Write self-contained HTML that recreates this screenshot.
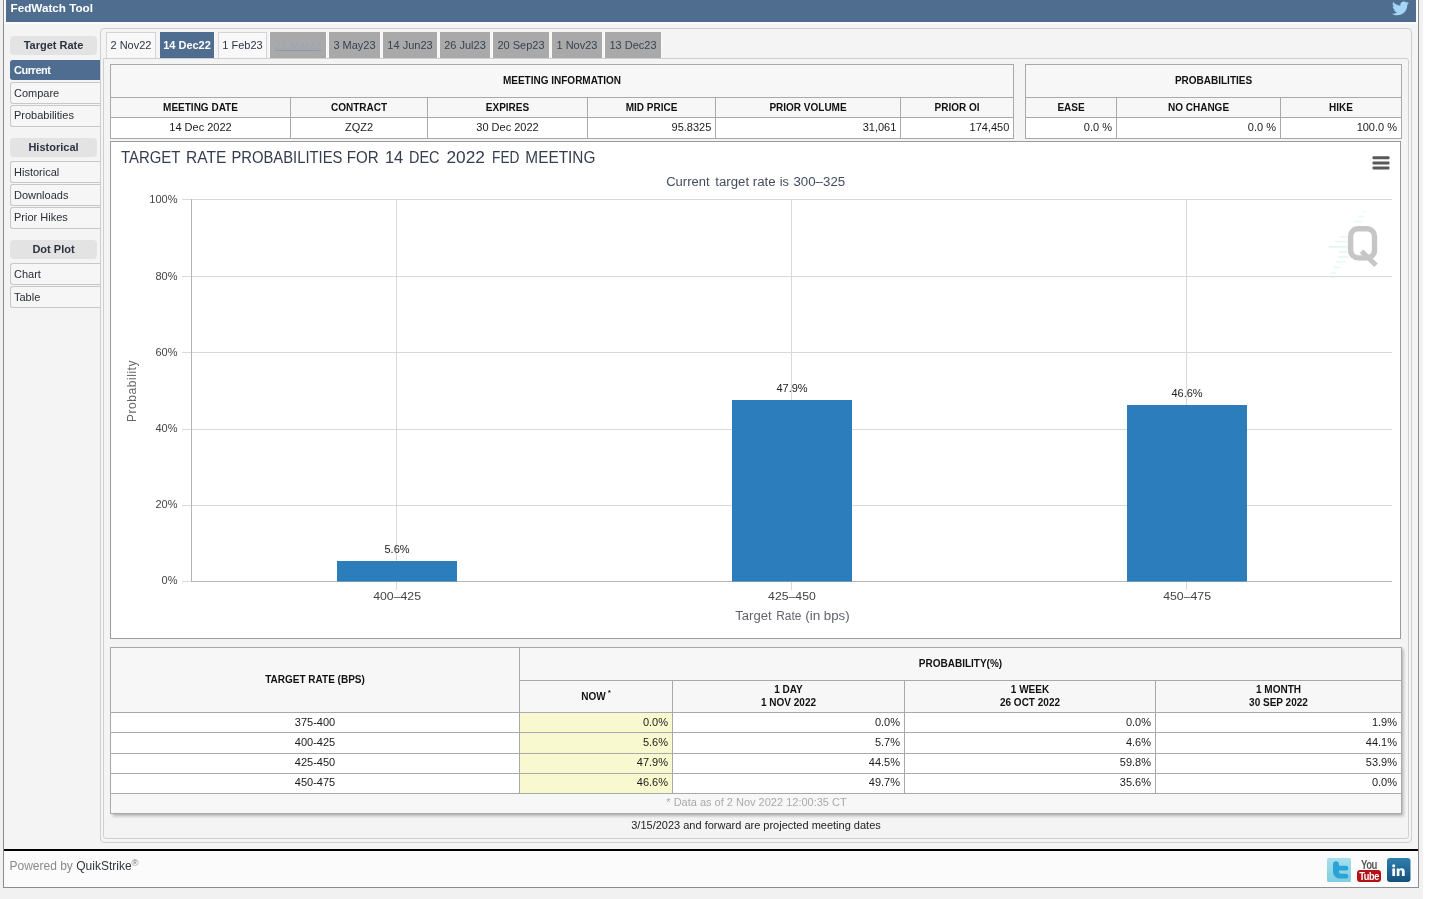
<!DOCTYPE html><html><head><meta charset="utf-8"><title>FedWatch Tool</title><style>
*{box-sizing:border-box}
html,body{margin:0;padding:0}
body{width:1456px;height:899px;overflow:hidden;background:#fff;font-family:"Liberation Sans",sans-serif;font-size:11px;color:#222;position:relative}
.a{position:absolute}
.t{position:absolute;white-space:nowrap;line-height:1}
.c{text-align:center}
.r{text-align:right}
.b{font-weight:bold}
.pill{position:absolute;left:10px;width:87px;height:19px;background:#e3e3e3;border-radius:4px;text-align:center;font-weight:bold;font-size:11px;line-height:19px;color:#2b3340}
.it{position:absolute;left:10px;width:91px;height:21px;background:#f6f6f6;border:1px solid #c8c8c8;border-right:none;border-radius:3px 0 0 3px;font-size:11px;line-height:19px;padding-left:3px;color:#2a2e36}
.it.sel{background:#4f6d90;border-color:#4f6d90;color:#fff;font-weight:bold;letter-spacing:-0.45px}
.tab{position:absolute;top:32px;height:26px;font-size:11px;line-height:25px;text-align:center;border:1px solid #d4d4d4;border-bottom:none;background:#f8f8f8;color:#2b3647}
.tab.g{background:#a9a9a9;border-color:#a9a9a9;color:#364353;box-shadow:-1px 0 0 #fafafa,1px 0 0 #fafafa}
.tab.sel{background:#4f6d90;border-color:#4f6d90;color:#fff;font-weight:bold}
.cell{position:absolute;border:1px solid #a9a9a9;margin:0}
.hd{background:#f7f7f7;font-weight:bold;font-size:10px;text-align:center;color:#111}
.dt{background:#fff;font-size:11px;color:#1a1a1a}
</style></head><body><div id="w" style="position:absolute;left:0;top:0;width:1456px;height:899px;will-change:transform">
<div class="a" style="left:0;top:0;width:1423px;height:899px;background:#f1f1f1"></div>
<div class="a" style="left:3px;top:-1px;width:1416px;height:889px;border:1px solid #8c8c8c;background:#f4f4f4"></div>
<div class="a" style="left:4px;top:0;width:1414px;height:24px;background:#fcfcfc"></div>
<div class="a" style="left:6px;top:0;width:1410px;height:22px;background:#4f6d8f"></div>
<div class="t b" style="left:10.5px;top:1.5px;font-size:11.7px;color:#fff">FedWatch Tool</div>
<svg class="a" style="left:1392px;top:1px;width:17px;height:15px" viewBox="0 0 24 20"><path fill="#a6d6f5" d="M24 2.4c-.9.4-1.8.7-2.8.8 1-.6 1.8-1.6 2.2-2.7-1 .6-2 1-3.100 1.200C19.300.6 18 0 16.600 0c-2.700 0-4.900 2.200-4.900 4.900 0 .4 0 .8.100 1.100C7.700 5.800 4.100 3.900 1.700.9 1.200 1.700 1 2.500 1 3.400c0 1.700.9 3.200 2.200 4.100-.8 0-1.600-.2-2.200-.6v.1c0 2.400 1.700 4.400 3.900 4.800-.4.100-.8.200-1.300.2-.3 0-.6 0-.9-.1.600 2 2.400 3.400 4.600 3.400-1.700 1.300-3.800 2.100-6.100 2.100-.4 0-.8 0-1.200-.1C2.200 18.700 4.800 19.500 7.500 19.500c9.100 0 14-7.500 14-14v-.6c1-.7 1.800-1.600 2.500-2.500z"/></svg>
<div class="pill" style="top:36px">Target Rate</div>
<div class="it sel" style="top:60px;height:20px;line-height:18px">Current</div>
<div class="it" style="top:82px;height:22px;line-height:20px">Compare</div>
<div class="it" style="top:105px;height:22px;line-height:18px">Probabilities</div>
<div class="pill" style="top:138px">Historical</div>
<div class="it" style="top:161px;height:22px;line-height:20px">Historical</div>
<div class="it" style="top:184px;height:22px;line-height:20px">Downloads</div>
<div class="it" style="top:207px;height:22px;line-height:19.0px">Prior Hikes</div>
<div class="pill" style="top:240px">Dot Plot</div>
<div class="it" style="top:263px;height:22px;line-height:20px">Chart</div>
<div class="it" style="top:286px;height:22px;line-height:20px">Table</div>
<div class="a" style="left:100px;top:28px;width:1312px;height:815px;border:1px solid #cfcfcf;border-radius:4px;background:#f4f4f4"></div>
<div class="a" style="left:103px;top:58px;width:1306px;height:781px;border:1px solid #cfcfcf;border-radius:0 3px 3px 3px;background:#f4f4f4"></div>
<div class="tab " style="left:106px;width:50px">2 Nov22</div>
<div class="tab sel" style="left:160px;width:54px">14 Dec22</div>
<div class="tab " style="left:218px;width:49px">1 Feb23</div>
<div class="tab g" style="left:270px;width:56px"><u style="color:#9da4b8;text-decoration-color:#8d98ab">22 Mar23</u></div>
<div class="tab g" style="left:329px;width:51px">3 May23</div>
<div class="tab g" style="left:383px;width:54px">14 Jun23</div>
<div class="tab g" style="left:440px;width:50px">26 Jul23</div>
<div class="tab g" style="left:493px;width:56px">20 Sep23</div>
<div class="tab g" style="left:552px;width:50px">1 Nov23</div>
<div class="tab g" style="left:605px;width:56px">13 Dec23</div>
<div class="cell hd" style="left:110px;top:64px;width:904px;height:34px;line-height:32px;">MEETING INFORMATION</div>
<div class="cell hd" style="left:110px;top:97px;width:181px;height:21px;line-height:20.0px;">MEETING DATE</div>
<div class="cell dt" style="left:110px;top:117px;width:181px;height:22px;line-height:18px;text-align:center">14 Dec 2022</div>
<div class="cell hd" style="left:290px;top:97px;width:138px;height:21px;line-height:20.0px;">CONTRACT</div>
<div class="cell dt" style="left:290px;top:117px;width:138px;height:22px;line-height:18px;text-align:center">ZQZ2</div>
<div class="cell hd" style="left:427px;top:97px;width:161px;height:21px;line-height:20.0px;">EXPIRES</div>
<div class="cell dt" style="left:427px;top:117px;width:161px;height:22px;line-height:18px;text-align:center">30 Dec 2022</div>
<div class="cell hd" style="left:587px;top:97px;width:129px;height:21px;line-height:20.0px;">MID PRICE</div>
<div class="cell dt" style="left:587px;top:117px;width:129px;height:22px;line-height:18px;text-align:right;padding-right:3.7px">95.8325</div>
<div class="cell hd" style="left:715px;top:97px;width:186px;height:21px;line-height:20.0px;">PRIOR VOLUME</div>
<div class="cell dt" style="left:715px;top:117px;width:186px;height:22px;line-height:18px;text-align:right;padding-right:3.7px">31,061</div>
<div class="cell hd" style="left:900px;top:97px;width:114px;height:21px;line-height:20.0px;">PRIOR OI</div>
<div class="cell dt" style="left:900px;top:117px;width:114px;height:22px;line-height:18px;text-align:right;padding-right:3.7px">174,450</div>
<div class="cell hd" style="left:1025px;top:64px;width:377px;height:34px;line-height:32px;">PROBABILITIES</div>
<div class="cell hd" style="left:1025px;top:97px;width:92px;height:21px;line-height:20.0px;">EASE</div>
<div class="cell dt" style="left:1025px;top:117px;width:92px;height:22px;line-height:18px;text-align:right;padding-right:4px">0.0 %</div>
<div class="cell hd" style="left:1116px;top:97px;width:165px;height:21px;line-height:20.0px;">NO CHANGE</div>
<div class="cell dt" style="left:1116px;top:117px;width:165px;height:22px;line-height:18px;text-align:right;padding-right:4px">0.0 %</div>
<div class="cell hd" style="left:1280px;top:97px;width:122px;height:21px;line-height:20.0px;">HIKE</div>
<div class="cell dt" style="left:1280px;top:117px;width:122px;height:22px;line-height:18px;text-align:right;padding-right:4px">100.0 %</div>
<div class="a" style="left:110px;top:141px;width:1291px;height:498px;border:1px solid #9a9a9a;background:#fff"></div>
<svg class="a" style="left:0;top:0" width="1456" height="899" viewBox="0 0 1456 899" font-family="Liberation Sans, sans-serif">
<text y="163" font-size="16.5" fill="#333d4e" ><tspan x="120.97" textLength="59.47" lengthAdjust="spacingAndGlyphs">TARGET</tspan><tspan x="186.06" textLength="40.39" lengthAdjust="spacingAndGlyphs">RATE</tspan><tspan x="231.39" textLength="111.09" lengthAdjust="spacingAndGlyphs">PROBABILITIES</tspan><tspan x="346.76" textLength="31.94" lengthAdjust="spacingAndGlyphs">FOR</tspan><tspan x="384.94" textLength="18.34" lengthAdjust="spacingAndGlyphs">14</tspan><tspan x="409.01" textLength="30.54" lengthAdjust="spacingAndGlyphs">DEC</tspan><tspan x="446.43" textLength="38.44" lengthAdjust="spacingAndGlyphs">2022</tspan><tspan x="492.08" textLength="27.38" lengthAdjust="spacingAndGlyphs">FED</tspan><tspan x="525.34" textLength="70.01" lengthAdjust="spacingAndGlyphs">MEETING</tspan></text>
<text y="186" font-size="12" fill="#434d5e" ><tspan x="666.24" textLength="43.36" lengthAdjust="spacingAndGlyphs">Current</tspan><tspan x="715.30" textLength="33.80" lengthAdjust="spacingAndGlyphs">target</tspan><tspan x="752.82" textLength="22.87" lengthAdjust="spacingAndGlyphs">rate</tspan><tspan x="779.75" textLength="9.21" lengthAdjust="spacingAndGlyphs">is</tspan><tspan x="793.49" textLength="51.66" lengthAdjust="spacingAndGlyphs">300–325</tspan></text>
<path d="M182 199.5H1392" stroke="#d9d9d9" stroke-width="1"/>
<path d="M182 276.5H1392" stroke="#d9d9d9" stroke-width="1"/>
<path d="M182 352.5H1392" stroke="#d9d9d9" stroke-width="1"/>
<path d="M182 429.5H1392" stroke="#d9d9d9" stroke-width="1"/>
<path d="M182 505.5H1392" stroke="#d9d9d9" stroke-width="1"/>
<path d="M396.5 200V590" stroke="#d9d9d9" stroke-width="1"/>
<path d="M791.5 200V590" stroke="#d9d9d9" stroke-width="1"/>
<path d="M1186.5 200V590" stroke="#d9d9d9" stroke-width="1"/>
<path d="M191.5 199V582" stroke="#b4b4b4" stroke-width="1"/>
<path d="M182 581.5H191" stroke="#d9d9d9" stroke-width="1"/>
<path d="M191 581.5H1392" stroke="#b4b4b4" stroke-width="1"/>
<text x="177.5" y="203.4" font-size="11" fill="#444" text-anchor="end">100%</text>
<text x="177.5" y="279.6" font-size="11" fill="#444" text-anchor="end">80%</text>
<text x="177.5" y="355.8" font-size="11" fill="#444" text-anchor="end">60%</text>
<text x="177.5" y="432.0" font-size="11" fill="#444" text-anchor="end">40%</text>
<text x="177.5" y="508.2" font-size="11" fill="#444" text-anchor="end">20%</text>
<text x="177.5" y="584.4" font-size="11" fill="#444" text-anchor="end">0%</text>
<rect x="337" y="561" width="120" height="20.5" fill="#2b7ebb"/>
<text x="397.0" y="553" font-size="11" fill="#222" text-anchor="middle">5.6%</text>
<text y="600" font-size="11" fill="#444" ><tspan x="373.22" textLength="47.80" lengthAdjust="spacingAndGlyphs">400–425</tspan></text>
<rect x="732" y="400" width="120" height="181.5" fill="#2b7ebb"/>
<text x="792.0" y="392" font-size="11" fill="#222" text-anchor="middle">47.9%</text>
<text y="600" font-size="11" fill="#444" ><tspan x="768.12" textLength="47.66" lengthAdjust="spacingAndGlyphs">425–450</tspan></text>
<rect x="1127" y="405" width="120" height="176.5" fill="#2b7ebb"/>
<text x="1187.0" y="397" font-size="11" fill="#222" text-anchor="middle">46.6%</text>
<text y="600" font-size="11" fill="#444" ><tspan x="1163.22" textLength="47.80" lengthAdjust="spacingAndGlyphs">450–475</tspan></text>
<text y="620" font-size="12" fill="#62656f" ><tspan x="735.22" textLength="36.37" lengthAdjust="spacingAndGlyphs">Target</tspan><tspan x="776.22" textLength="25.21" lengthAdjust="spacingAndGlyphs">Rate</tspan><tspan x="805.16" textLength="15.13" lengthAdjust="spacingAndGlyphs">(in</tspan><tspan x="823.74" textLength="25.88" lengthAdjust="spacingAndGlyphs">bps)</tspan></text>
<text transform="translate(135.5 391) rotate(-90)" font-size="12" fill="#666" text-anchor="middle" letter-spacing="0.55">Probability</text>
<rect x="1372.5" y="156.3" width="17" height="3" rx="1" fill="#595959"/>
<rect x="1372.5" y="161.4" width="17" height="3" rx="1" fill="#595959"/>
<rect x="1372.5" y="166.5" width="17" height="3" rx="1" fill="#595959"/>
<g>
<rect x="1362.6" y="210.6" width="3.8" height="1.6" fill="#c4ece8" opacity="0.28"/>
<rect x="1357.8" y="215.8" width="6.6" height="1.6" fill="#c4ece8" opacity="0.33"/>
<rect x="1354.1" y="220.8" width="7.6" height="1.6" fill="#c4ece8" opacity="0.39"/>
<rect x="1351.2" y="225.9" width="6.6" height="1.6" fill="#c4ece8" opacity="0.28"/>
<rect x="1348.4" y="231.0" width="5.7" height="1.6" fill="#c4ece8" opacity="0.22"/>
<rect x="1339.9" y="236.1" width="7.6" height="1.6" fill="#c4ece8" opacity="0.39"/>
<rect x="1335.1" y="240.8" width="12.3" height="1.6" fill="#c4ece8" opacity="0.44"/>
<rect x="1328.5" y="246.0" width="18.9" height="1.6" fill="#c4ece8" opacity="0.55"/>
<rect x="1338.9" y="251.0" width="8.0" height="1.6" fill="#c4ece8" opacity="0.39"/>
<rect x="1338.0" y="256.2" width="10.4" height="1.6" fill="#c4ece8" opacity="0.44"/>
<rect x="1336.1" y="261.2" width="9.5" height="1.6" fill="#c4ece8" opacity="0.39"/>
<rect x="1333.2" y="266.6" width="7.6" height="1.6" fill="#c4ece8" opacity="0.39"/>
<rect x="1331.4" y="272.0" width="4.7" height="1.6" fill="#c4ece8" opacity="0.33"/>
<rect x="1329.5" y="276.3" width="5.7" height="1.6" fill="#c4ece8" opacity="0.33"/>
<rect x="1350.6" y="228.7" width="23.9" height="29.2" rx="7.5" fill="none" stroke="#c6c6c6" stroke-width="5.4"/>
<path d="M1361.5 251.2L1376 265.3" stroke="#c6c6c6" stroke-width="5" fill="none"/>
</g>
</svg>
<div class="a" style="left:110px;top:647px;width:1292px;height:167px;background:#f7f7f7;box-shadow:1.5px 2px 3px rgba(0,0,0,.28)"></div>
<div class="cell hd" style="left:110px;top:647px;width:410px;height:66px;line-height:64px">TARGET RATE (BPS)</div>
<div class="cell hd" style="left:519px;top:647px;width:883px;height:34px;line-height:31px">PROBABILITY(%)</div>
<div class="cell hd" style="left:519px;top:680px;width:154px;height:33px;line-height:31px;padding-right:2px">NOW<span style="font-size:8px;position:relative;top:-5px;left:2px">*</span></div>
<div class="cell hd" style="left:672px;top:680px;width:233px;height:33px;line-height:13px;padding-top:2.4px">1 DAY<br>1 NOV 2022</div>
<div class="cell hd" style="left:904px;top:680px;width:252px;height:33px;line-height:13px;padding-top:2.4px">1 WEEK<br>26 OCT 2022</div>
<div class="cell hd" style="left:1155px;top:680px;width:247px;height:33px;line-height:13px;padding-top:2.4px">1 MONTH<br>30 SEP 2022</div>
<div class="cell dt" style="left:110px;top:712px;width:410px;height:21px;line-height:19px;text-align:center">375-400</div>
<div class="cell dt" style="left:519px;top:712px;width:154px;height:21px;background:#f9f9cf;line-height:19px;text-align:right;padding-right:4px">0.0%</div>
<div class="cell dt" style="left:672px;top:712px;width:233px;height:21px;line-height:19px;text-align:right;padding-right:4px">0.0%</div>
<div class="cell dt" style="left:904px;top:712px;width:252px;height:21px;line-height:19px;text-align:right;padding-right:4px">0.0%</div>
<div class="cell dt" style="left:1155px;top:712px;width:247px;height:21px;line-height:19px;text-align:right;padding-right:4px">1.9%</div>
<div class="cell dt" style="left:110px;top:732px;width:410px;height:22px;line-height:18px;text-align:center">400-425</div>
<div class="cell dt" style="left:519px;top:732px;width:154px;height:22px;background:#f9f9cf;line-height:18px;text-align:right;padding-right:4px">5.6%</div>
<div class="cell dt" style="left:672px;top:732px;width:233px;height:22px;line-height:18px;text-align:right;padding-right:4px">5.7%</div>
<div class="cell dt" style="left:904px;top:732px;width:252px;height:22px;line-height:18px;text-align:right;padding-right:4px">4.6%</div>
<div class="cell dt" style="left:1155px;top:732px;width:247px;height:22px;line-height:18px;text-align:right;padding-right:4px">44.1%</div>
<div class="cell dt" style="left:110px;top:753px;width:410px;height:21px;line-height:17.6px;text-align:center">425-450</div>
<div class="cell dt" style="left:519px;top:753px;width:154px;height:21px;background:#f9f9cf;line-height:17.6px;text-align:right;padding-right:4px">47.9%</div>
<div class="cell dt" style="left:672px;top:753px;width:233px;height:21px;line-height:17.6px;text-align:right;padding-right:4px">44.5%</div>
<div class="cell dt" style="left:904px;top:753px;width:252px;height:21px;line-height:17.6px;text-align:right;padding-right:4px">59.8%</div>
<div class="cell dt" style="left:1155px;top:753px;width:247px;height:21px;line-height:17.6px;text-align:right;padding-right:4px">53.9%</div>
<div class="cell dt" style="left:110px;top:773px;width:410px;height:21px;line-height:17.6px;text-align:center">450-475</div>
<div class="cell dt" style="left:519px;top:773px;width:154px;height:21px;background:#f9f9cf;line-height:17.6px;text-align:right;padding-right:4px">46.6%</div>
<div class="cell dt" style="left:672px;top:773px;width:233px;height:21px;line-height:17.6px;text-align:right;padding-right:4px">49.7%</div>
<div class="cell dt" style="left:904px;top:773px;width:252px;height:21px;line-height:17.6px;text-align:right;padding-right:4px">35.6%</div>
<div class="cell dt" style="left:1155px;top:773px;width:247px;height:21px;line-height:17.6px;text-align:right;padding-right:4px">0.0%</div>
<div class="cell hd" style="left:110px;top:793px;width:1292px;height:21px;font-weight:normal;font-size:11px;color:#aaa;line-height:17px;padding-left:1px">* Data as of 2 Nov 2022 12:00:35 CT</div>
<div class="t c" style="left:456px;width:600px;top:820px;font-size:11px;color:#222">3/15/2023 and forward are projected meeting dates</div>
<div class="a" style="left:4px;top:849px;width:1414px;height:38px;background:#fbfbfb;border-top:2px solid #000"></div>
<div class="t" style="left:9.5px;top:859.5px;font-size:12px;color:#8a8a8a">Powered by <span style="color:#30363c">QuikStrike</span><span style="font-size:9.5px;position:relative;top:-3.6px;color:#777">®</span></div>
<svg class="a" style="left:1327px;top:858px" width="24" height="24" viewBox="0 0 24 24"><defs><linearGradient id="tg" x1="0" y1="0" x2="0" y2="1"><stop offset="0" stop-color="#a6e0ee"/><stop offset="1" stop-color="#7fcde4"/></linearGradient></defs><rect width="24" height="24" rx="1.5" fill="url(#tg)"/><path d="M9 3.300c1.700 0 3 1.300 3 3v1.400h7c1.400 0 2.400 1.100 2.400 2.450s-1 2.450-2.400 2.450h-7v1.200c0 1.200.900 2 2.100 2h4.900c1.400 0 2.400 1.100 2.400 2.400s-1 2.400-2.400 2.400h-5.200c-4.400 0-7.800-3-7.800-7.200V6.300c0-1.700 1.300-3 3-3z" fill="#2ba3d4"/></svg>
<div class="a" style="left:1357px;top:858px;width:24px;height:24px"><div class="a" style="left:0;top:0;width:24px;height:13px;background:#fdfdfd;border-radius:3px 3px 0 0"></div><div class="t b c" style="left:0;width:24px;top:-0.3px;font-size:13px;color:#5c5c5c;letter-spacing:-0.6px;transform:scaleX(.74)">You</div><div class="a" style="left:0;top:12px;width:24px;height:12px;background:#b31217;border-radius:3px"></div><div class="t b c" style="left:-3px;width:30px;top:12.500px;font-size:11.500px;color:#fff;letter-spacing:-0.5px;transform:scaleX(.8)">Tube</div></div>
<svg class="a" style="left:1387px;top:858px" width="23.5" height="24" viewBox="0 0 24 24" preserveAspectRatio="none"><defs><linearGradient id="lg" x1="0" y1="0" x2="0" y2="1"><stop offset="0" stop-color="#2e7fae"/><stop offset="1" stop-color="#14527c"/></linearGradient></defs><rect width="24" height="24" rx="3" fill="url(#lg)"/><g fill="#fff" transform="translate(11.7 12.8) scale(.87) translate(-12.7 -12)"><rect x="5.500" y="9.300" width="3.200" height="8.700"/><circle cx="7.100" cy="6.300" r="1.800"/><path d="M10.700 9.300h3v1.300c.6-1 1.600-1.600 3-1.600 2.200 0 3.300 1.400 3.300 3.700V18h-3.200v-4.700c0-1.100-.4-1.800-1.400-1.800-1.100 0-1.600.8-1.600 1.900V18h-3.100z"/></g></svg>
</div></body></html>
